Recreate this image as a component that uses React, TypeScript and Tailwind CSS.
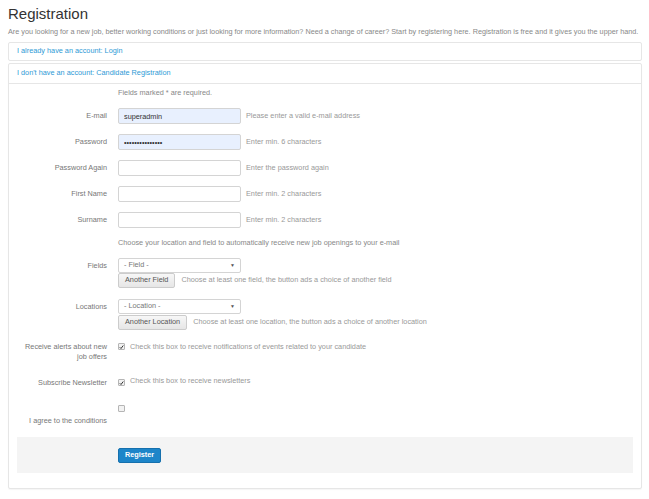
import React from "react";

const font = { fontFamily: '"Liberation Sans", Arial, sans-serif' };

function Label({ children }: { children: React.ReactNode }) {
  return <div className="w-[90px] shrink-0 text-right text-[7.3px] leading-[10px] text-[#777]">{children}</div>;
}

function TextRow({ label, help, value, type = "text", filled = false }: { label: string; help: string; value?: string; type?: string; filled?: boolean }) {
  return (
    <div className="flex items-center h-[16px] mb-[10px]">
      <Label>{label}</Label>
      <input
        readOnly
        type={type}
        value={value ?? ""}
        className={`ml-[11px] w-[123px] h-[16px] rounded-[2px] border border-[#d4d4d4] px-[5px] text-[7.3px] text-[#333] outline-none ${filled ? "bg-[#e8f0fe]" : "bg-white"}`}
      />
      <span className="ml-[5px] text-[7.3px] text-[#999]">{help}</span>
    </div>
  );
}

function FakeSelect({ text }: { text: string }) {
  return (
    <div className="w-[123px] h-[15px] rounded-[2px] border border-[#d4d4d4] bg-white flex items-center justify-between px-[5px] text-[7.3px] text-[#777]">
      <span>{text}</span>
      <span className="text-[5px] text-[#555]">▼</span>
    </div>
  );
}

function Check({ checked }: { checked: boolean }) {
  return (
    <span className="inline-flex w-[7px] h-[7px] rounded-[1px] border border-[#b5b5b5] bg-[#f2f2f2] items-center justify-center shrink-0">
      {checked && (
        <svg viewBox="0 0 10 10" className="w-[6px] h-[6px]">
          <path d="M1.5 5.5 L4 8 L8.5 2" stroke="#333" strokeWidth="2" fill="none" />
        </svg>
      )}
    </span>
  );
}

export default function App() {
  return (
    <div className="w-[649px] h-[499px] bg-white px-[8px]" style={font}>
      <h1 className="text-[15px] leading-[18px] text-[#333] pt-[5px]">Registration</h1>
      <p className="text-[7.25px] leading-[10px] text-[#888] mt-[4px] whitespace-nowrap">
        Are you looking for a new job, better working conditions or just looking for more information? Need a change of career? Start by registering here. Registration is free and it gives you the upper hand.
      </p>

      <div className="mt-[5px] w-[634px] border border-[#e6e6e6] rounded-[2px] h-[19px] flex items-center px-[8px]">
        <span className="text-[7.3px] text-[#2d9ad6]">I already have an account: Login</span>
      </div>

      <div className="mt-[2px] w-[634px] border border-[#e6e6e6] rounded-[2px] shadow-[0_1px_1px_rgba(0,0,0,0.04)]">
        <div className="h-[20px] flex items-center px-[8px] border-b border-[#e6e6e6]">
          <span className="text-[7.3px] text-[#2d9ad6]">I don&apos;t have an account: Candidate Registration</span>
        </div>

        <div className="px-[8px] pb-[15px]">
          <div className="flex items-center h-[18px]">
            <div className="w-[90px]" />
            <span className="ml-[11px] text-[7.3px] text-[#888]">Fields marked * are required.</span>
          </div>

          <div className="mt-[6px]">
            <TextRow label="E-mail" value="superadmin" filled help="Please enter a valid e-mail address" />
            <TextRow label="Password" type="password" value="superadmin12345" filled help="Enter min. 6 characters" />
            <TextRow label="Password Again" type="password" help="Enter the password again" />
            <TextRow label="First Name" help="Enter min. 2 characters" />
            <TextRow label="Surname" help="Enter min. 2 characters" />
          </div>

          <div className="flex items-center h-[14px] -mt-[2px]">
            <div className="w-[90px]" />
            <span className="ml-[11px] text-[7.3px] text-[#888]">Choose your location and field to automatically receive new job openings to your e-mail</span>
          </div>

          <div className="flex mt-[8px]">
            <div className="h-[15px] flex items-center justify-end w-[90px]">
              <Label>Fields</Label>
            </div>
            <div className="ml-[11px]">
              <FakeSelect text="- Field -" />
              <div className="flex items-center">
                <button className="h-[15px] px-[6px] rounded-[2px] border border-[#ccc] bg-gradient-to-b from-[#f7f7f7] to-[#e6e6e6] text-[7.3px] text-[#555]">Another Field</button>
                <span className="ml-[6px] text-[7.3px] text-[#999]">Choose at least one field, the button ads a choice of another field</span>
              </div>
            </div>
          </div>

          <div className="flex mt-[11px]">
            <div className="h-[15px] flex items-center justify-end w-[90px]">
              <Label>Locations</Label>
            </div>
            <div className="ml-[11px]">
              <FakeSelect text="- Location -" />
              <div className="flex items-center mt-[1px]">
                <button className="h-[15px] px-[6px] rounded-[2px] border border-[#ccc] bg-gradient-to-b from-[#f7f7f7] to-[#e6e6e6] text-[7.3px] text-[#555]">Another Location</button>
                <span className="ml-[6px] text-[7.3px] text-[#999]">Choose at least one location, the button ads a choice of another location</span>
              </div>
            </div>
          </div>

          <div className="flex mt-[12px]">
            <Label>Receive alerts about new<br />job offers</Label>
            <div className="ml-[11px] flex items-start gap-[5px] pt-[1px]">
              <Check checked />
              <span className="text-[7.3px] leading-[9px] text-[#999] -mt-[1px]">Check this box to receive notifications of events related to your candidate</span>
            </div>
          </div>

          <div className="flex mt-[16px]">
            <Label>Subscribe Newsletter</Label>
            <div className="ml-[11px] flex items-start gap-[5px] pt-[1px]">
              <Check checked />
              <span className="text-[7.3px] leading-[9px] text-[#999] -mt-[3px]">Check this box to receive newsletters</span>
            </div>
          </div>

          <div className="flex mt-[6px]">
            <div className="pt-[22px]">
              <Label>I agree to the conditions</Label>
            </div>
            <div className="ml-[11px] pt-[1px]">
              <Check checked={false} />
            </div>
          </div>

          <div className="mt-[11px] h-[36px] bg-[#f4f4f4] flex items-center">
            <div className="w-[90px]" />
            <button className="ml-[11px] h-[15px] px-[6px] rounded-[2px] bg-[#1d85c9] border border-[#1670ad] text-white text-[7.3px] font-bold">Register</button>
          </div>
        </div>
      </div>
    </div>
  );
}
